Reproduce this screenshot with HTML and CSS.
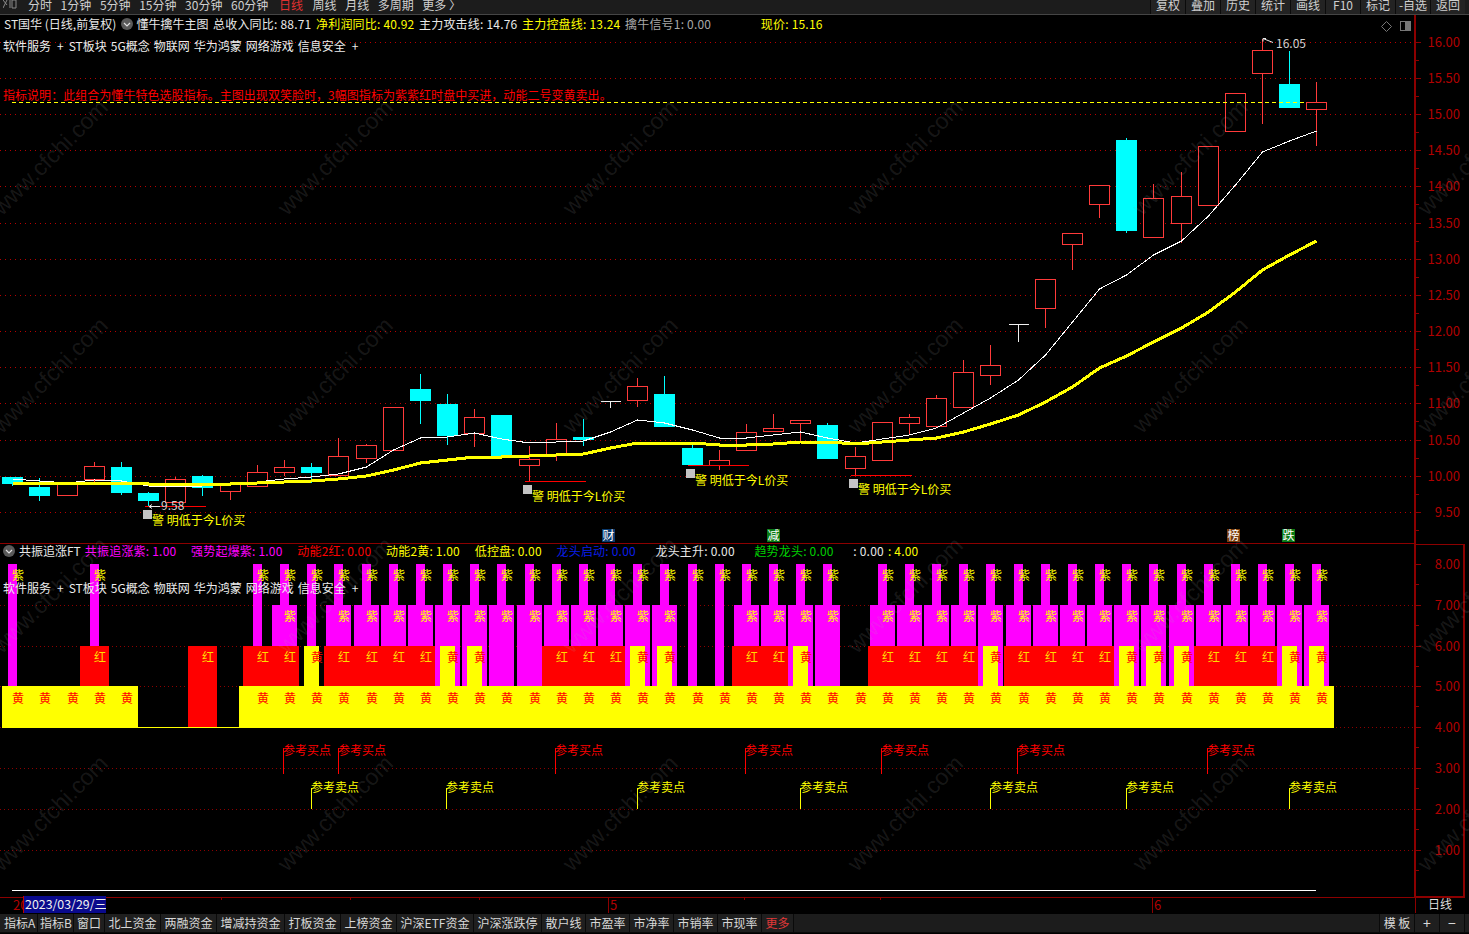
FILE: index.html
```html
<!DOCTYPE html>
<html lang="zh-CN">
<head>
<meta charset="utf-8">
<title>ST国华 日线</title>
<link rel="stylesheet" href="styles.css">
</head>
<body>
<div class="app">
  <header class="toolbar">
    <svg class="tool-logo" width="14" height="9" viewBox="0 0 14 9"><path d="M0 0l4 5M4 0L0 8M7 0v8M9 0h4v8h-4z"/></svg>
    <nav class="periods">
      <span>分时</span><span>1分钟</span><span>5分钟</span><span>15分钟</span><span>30分钟</span><span>60分钟</span>
      <span class="is-active">日线</span><span>周线</span><span>月线</span><span>多周期</span><span>更多 〉</span>
    </nav>
    <nav class="tool-buttons">
      <span>复权</span><span>叠加</span><span>历史</span><span>统计</span><span>画线</span><span>F10</span><span>标记</span><span>-自选</span><span>返回</span>
    </nav>
  </header>

  <section class="pane pane-main">
    <svg id="main-chart" class="chart" viewBox="0 15 1469 529" width="1469" height="529"></svg>
    <div class="legend legend-main">
      <span class="c-white c-title">ST国华 (日线,前复权)</span>
      <svg class="chevron" width="12" height="12" viewBox="0 0 12 12"><circle cx="6" cy="6" r="6"/><path d="M3 5l3 3 3-3"/></svg>
      <span class="c-white c-title tight-left">懂牛擒牛主图</span>
      <span class="c-white">总收入同比: 88.71</span>
      <span class="c-yellow">净利润同比: 40.92</span>
      <span class="c-white">主力攻击线: 14.76</span>
      <span class="c-yellow">主力控盘线: 13.24</span>
      <span class="c-gray">擒牛信号1: 0.00</span>
      <span class="c-yellow gap-price">现价: 15.16</span>
    </div>
    <div class="tags tags-main"><span>软件服务</span><span class="tag-plus">+</span><span>ST板块</span><span>5G概念</span><span>物联网</span><span>华为鸿蒙</span><span>网络游戏</span><span>信息安全</span><span class="tag-plus">+</span></div>
    <div class="note">指标说明：此组合为懂牛特色选股指标。主图出现双笑脸时，3幅图指标为紫紫红时盘中买进，动能二号变黄卖出。</div>
  </section>

  <section class="pane pane-sub">
    <svg id="sub-chart" class="chart" viewBox="0 544 1469 354" width="1469" height="354"></svg>
    <div class="legend legend-sub">
      <svg class="chevron" width="12" height="12" viewBox="0 0 12 12"><circle cx="6" cy="6" r="6"/><path d="M3 5l3 3 3-3"/></svg>
      <span class="c-white c-title">共振追涨FT</span>
      <span class="c-magenta">共振追涨紫: 1.00</span>
      <span class="c-magenta gap-sub">强势起爆紫: 1.00</span>
      <span class="c-red gap-sub">动能2红: 0.00</span>
      <span class="c-yellow gap-sub">动能2黄: 1.00</span>
      <span class="c-yellow gap-sub">低控盘: 0.00</span>
      <span class="c-blue gap-sub">龙头启动: 0.00</span>
      <span class="c-white gap-wide">龙头主升: 0.00</span>
      <span class="c-green gap-wide">趋势龙头: 0.00</span>
      <span class="c-white gap-wide">: 0.00</span>
      <span class="c-yellow">: 4.00</span>
    </div>
    <div class="tags tags-sub"><span>软件服务</span><span class="tag-plus">+</span><span>ST板块</span><span>5G概念</span><span>物联网</span><span>华为鸿蒙</span><span>网络游戏</span><span>信息安全</span><span class="tag-plus">+</span></div>
  </section>

  <section class="date-axis">
    <svg id="date-chart" class="chart" viewBox="0 898 1469 16" width="1469" height="16"></svg>
    <div class="date-cursor">2023/03/29/三</div>
    <div class="date-period">日线</div>
  </section>

  <footer class="tabs">
    <span class="tab-first">指标A</span><span class="tab-narrow">指标B</span><span class="tab-window">窗口</span><span>北上资金</span><span>两融资金</span><span>增减持资金</span><span>打板资金</span><span>上榜资金</span><span>沪深ETF资金</span><span>沪深涨跌停</span><span>散户线</span><span>市盈率</span><span>市净率</span><span>市销率</span><span>市现率</span><span class="tab-more">更多</span>
    <span class="tab-template">模 板</span><span class="tab-zoom">+</span><span class="tab-zoom">−</span>
  </footer>

  <svg id="watermark" class="watermark" viewBox="0 0 1469 934" width="1469" height="934"></svg>
</div>
<script src="script.js"></script>
</body>
</html>
```

FILE: styles.css
```css
* { box-sizing: border-box; }
html, body { margin: 0; padding: 0; background: #000; }
body { font-family: "Noto Sans CJK SC", "Noto Sans", sans-serif; font-size: 12px; color: #ddd; }
.app { position: relative; width: 1469px; height: 934px; overflow: hidden; display: flex; flex-direction: column; background: #000; }

/* top toolbar */
.toolbar { flex: none; height: 15px; display: flex; background: #1c1c1c; border-bottom: 1px solid #454545; overflow: hidden; line-height: 10px; color: #cfcfcf; padding-left: 3px; }
.tool-logo { flex: none; }
.tool-logo path { fill: none; stroke: #8a8a8a; stroke-width: 1; }
.periods { display: flex; gap: 8.6px; margin-left: 11px; }
.periods .is-active { color: #e03030; margin: 0 1px 0 2px; }
.tool-buttons { margin-left: auto; margin-right: 4px; display: flex; gap: 1px; background: #0b0b0b; border-left: 1px solid #0b0b0b; }
.tool-buttons span { width: 34px; text-align: center; background: #232323; }

/* chart panes */
.pane { position: relative; flex: none; }
.pane-main { height: 529px; }
.pane-sub { height: 354px; }
.chart { display: block; }
.legend { position: absolute; left: 4px; display: flex; align-items: center; gap: 4.6px; white-space: nowrap; line-height: 16px; }
.legend span { letter-spacing: 0.2px; }
.legend .c-title { letter-spacing: 0; }
.legend .tight-left { margin-left: -1px; }
.legend-main { top: 1px; }
.legend-sub { top: -1px; left: 3px; gap: 4px; }
.chevron { flex: none; }
.chevron circle { fill: #5a5a5a; }
.chevron path { fill: none; stroke: #e0e0e0; stroke-width: 1.2; }
.gap-price { margin-left: 45px; }
.gap-sub { margin-left: 10.7px; }
.gap-wide { margin-left: 15.6px; }
.c-white { color: #e8e8e8; }
.c-gray { color: #a8a8a8; }
.c-yellow { color: #ffff00; }
.c-magenta { color: #ff00ff; }
.c-red { color: #ff0000; }
.c-blue { color: #0a1eea; }
.c-green { color: #00d000; }
.tags { position: absolute; left: 3px; display: flex; gap: 4px; color: #ececec; white-space: nowrap; line-height: 16px; }
.tag-plus { margin: 0 1px 0 2px; }
.tags-main { top: 23px; }
.tags-sub { top: 36px; }
.note { position: absolute; left: 3px; top: 72px; color: #ff0000; white-space: nowrap; line-height: 16px; letter-spacing: 0.04px; }

/* svg chart parts */
.grid-main { stroke: #b80000; stroke-width: 1; stroke-dasharray: 1 4; shape-rendering: crispEdges; }
.grid-sub { stroke: #8c0000; stroke-width: 1; stroke-dasharray: 1 3; shape-rendering: crispEdges; }
.frame { stroke: #8c0000; stroke-width: 1; shape-rendering: crispEdges; fill: none; }
.frame-thick { stroke: #8c0000; stroke-width: 2; shape-rendering: crispEdges; fill: none; }
.axis-label { fill: #b00000; font-size: 13px; text-anchor: end; dominant-baseline: central; }
.candle-red { fill: #000; stroke: #ff3a3a; stroke-width: 1; shape-rendering: crispEdges; }
.candle-cyan { fill: #00ffff; shape-rendering: crispEdges; }
.wick-red { stroke: #ff3a3a; stroke-width: 1; shape-rendering: crispEdges; }
.wick-cyan { stroke: #00ffff; stroke-width: 1; shape-rendering: crispEdges; }
.wick-white { stroke: #f0f0f0; stroke-width: 1; shape-rendering: crispEdges; }
.ma-white { fill: none; stroke: #ffffff; stroke-width: 1; shape-rendering: crispEdges; }
.ma-yellow { fill: none; stroke: #ffff00; stroke-width: 3; shape-rendering: crispEdges; }
.last-price { stroke: #ffff00; stroke-width: 1; stroke-dasharray: 4 3; shape-rendering: crispEdges; }
.low-line { stroke: #ff0000; stroke-width: 1; shape-rendering: crispEdges; }
.mark-box { fill: #c4c4c4; }
.mark-text { fill: #ffff00; font-size: 12px; dominant-baseline: central; }
.extreme-line { fill: none; stroke: #e8e8e8; stroke-width: 1; }
.extreme-text { fill: #d2d2d2; font-size: 12px; dominant-baseline: central; }
.icon-outline { fill: none; stroke: #777; stroke-width: 1; }
.icon-fill { fill: #777; }
.flag-bg-blue { fill: #0a3a6e; }
.flag-bg-green { fill: #0a7a14; }
.flag-bg-brown { fill: #7a3c0a; }
.flag-text { fill: #fff; font-size: 12px; text-anchor: middle; dominant-baseline: central; }

.bar-magenta { fill: #ff00ff; shape-rendering: crispEdges; }
.bar-red { fill: #ff0000; shape-rendering: crispEdges; }
.bar-yellow { fill: #ffff00; shape-rendering: crispEdges; }
.cell-text { font-size: 12px; dominant-baseline: central; }
.cell-on-magenta { fill: #ffff00; }
.cell-on-red { fill: #ffdd00; }
.cell-on-yellow { fill: #ff0000; }
.signal-buy { fill: #ff0000; font-size: 12px; dominant-baseline: central; }
.signal-sell { fill: #ffff00; font-size: 12px; dominant-baseline: central; }
.signal-line-buy { stroke: #ff0000; stroke-width: 1; shape-rendering: crispEdges; }
.signal-line-sell { stroke: #ffff00; stroke-width: 1; shape-rendering: crispEdges; }
.base-line { stroke: #ffffff; stroke-width: 1; shape-rendering: crispEdges; }

/* date axis */
.date-axis { position: relative; flex: none; height: 16px; }
.date-label { fill: #b00000; font-size: 13px; dominant-baseline: central; }
.date-cursor { position: absolute; left: 23px; top: -2px; width: 83px; height: 17px; line-height: 16px; background: #0a0a8c; border-left: 1px solid #c00000; color: #f0f0f0; font-size: 12.4px; white-space: nowrap; overflow: hidden; padding-left: 1px; }
.date-period { position: absolute; left: 1428px; top: -2px; line-height: 16px; color: #ddd; }

/* bottom tabs */
.tabs { flex: none; height: 19px; display: flex; background: #1c1c1c; line-height: 18px; color: #d8d8d8; border-bottom: 1px solid #0a0a0a; }
.tabs span { padding: 0 3.5px; background: #1f1f1f; border-right: 1px solid #0a0a0a; white-space: nowrap; }
.tabs .tab-first { padding: 0 2px 0 4px; width: 38px; }
.tabs .tab-narrow { padding: 0 2px; width: 36px; }
.tabs .tab-window { padding: 0 3px; width: 31px; }
.tabs .tab-more { color: #e03838; }
.tabs .tab-template { margin-left: auto; width: 36px; padding: 0; text-align: center; border-left: 1px solid #0a0a0a; }
.tabs .tab-zoom { width: 25px; padding: 0; text-align: center; font-size: 14px; }
.tabs .tab-zoom:last-child { margin-right: 4px; }

/* watermark */
.watermark { position: absolute; left: 0; top: 0; pointer-events: none; }
.watermark-text { fill: rgba(170, 170, 170, 0.15); font-family: "Liberation Sans", sans-serif; font-size: 23px; text-anchor: middle; dominant-baseline: central; }
```

FILE: script.js
```js
var NS = 'http://www.w3.org/2000/svg';
var STEP = 27.17, X0 = 12.3;
function cx(i) { return Math.round(X0 + STEP * i) + 0.5; }

function el(parent, name, cls, attrs, text) {
  var n = document.createElementNS(NS, name);
  if (cls) n.setAttribute('class', cls);
  for (var k in attrs) n.setAttribute(k, attrs[k]);
  if (text !== undefined) n.textContent = text;
  parent.appendChild(n);
  return n;
}
function line(p, cls, x1, y1, x2, y2) { return el(p, 'line', cls, { x1: x1, y1: y1, x2: x2, y2: y2 }); }
function rect(p, cls, x, y, w, h) { return el(p, 'rect', cls, { x: x, y: y, width: w, height: h }); }
function text(p, cls, x, y, s) { return el(p, 'text', cls, { x: x, y: y }, s); }

/* ---------- main chart ---------- */
var main = document.getElementById('main-chart');
var prices = [['16.00', 42], ['15.50', 78], ['15.00', 114], ['14.50', 150], ['14.00', 186], ['13.50', 223], ['13.00', 259],
  ['12.50', 295], ['12.00', 331], ['11.50', 367], ['11.00', 403], ['10.50', 440], ['10.00', 476], ['9.50', 512]];
prices.forEach(function (p) {
  line(main, 'grid-main', 0, p[1] + 0.5, 1414, p[1] + 0.5);
  line(main, 'frame', 1416, p[1] + 0.5, 1421, p[1] + 0.5);
  line(main, 'frame', 1416, p[1] + 18.5, 1419, p[1] + 18.5);
  text(main, 'axis-label', 1460, p[1] - 1, p[0]);
});
line(main, 'frame-thick', 1415, 15, 1415, 544);

// top, bottom, wick top, wick bottom, kind
var candles = [
  [477, 484, 477, 486, 'c'], [487, 496, 478, 501, 'c'], [483, 495, 483, 495, 'r'], [466, 479, 462, 482, 'r'],
  [467, 493, 462, 495, 'c'], [493, 501, 492, 507, 'c'], [479, 502, 477, 502, 'r'], [476, 488, 475, 496, 'c'],
  [483, 491, 483, 500, 'r'], [472, 486, 465, 486, 'r'], [467, 472, 460, 476, 'r'], [467, 473, 463, 483, 'c'],
  [456, 475, 438, 475, 'r'], [445, 458, 444, 463, 'r'], [407, 450, 407, 450, 'r'], [389, 401, 374, 424, 'c'],
  [404, 436, 394, 445, 'c'], [417, 433, 409, 447, 'r'], [415, 456, 415, 456, 'c'], [459, 465, 446, 481, 'r'],
  [439, 454, 423, 461, 'r'], [437, 440, 419, 446, 'c'], [401, 401, 401, 408, 'w'], [386, 400, 378, 407, 'r'],
  [394, 427, 376, 427, 'c'], [448, 465, 442, 465, 'c'], [460, 465, 450, 470, 'r'], [432, 450, 424, 450, 'r'],
  [428, 431, 414, 432, 'r'], [420, 423, 420, 441, 'r'], [425, 459, 423, 459, 'c'], [456, 468, 447, 475, 'r'],
  [422, 460, 422, 460, 'r'], [417, 423, 414, 435, 'r'], [398, 426, 395, 426, 'r'], [372, 407, 360, 407, 'r'],
  [365, 375, 345, 385, 'r'], [324, 324, 324, 342, 'w'], [279, 308, 279, 328, 'r'], [233, 244, 233, 270, 'r'],
  [185, 204, 185, 218, 'r'], [140, 231, 138, 233, 'c'], [198, 237, 184, 237, 'r'], [196, 223, 172, 243, 'r'],
  [146, 205, 146, 205, 'r'], [93, 131, 93, 131, 'r'], [50, 73, 39, 124, 'r'], [84, 108, 51, 108, 'c'],
  [102, 109, 82, 146, 'r']
];
candles.forEach(function (c, i) {
  var x = cx(i), top = c[0], bot = c[1], wt = c[2], wb = c[3], k = c[4];
  if (k === 'w') {
    line(main, 'wick-white', x - 10, top + 0.5, x + 10, top + 0.5);
    line(main, 'wick-white', x, top, x, wb);
  } else if (k === 'c') {
    line(main, 'wick-cyan', x, wt, x, wb);
    rect(main, 'candle-cyan', x - 10.5, top, 21, bot - top);
  } else {
    if (wt < top) line(main, 'wick-red', x, wt, x, top);
    if (wb > bot) line(main, 'wick-red', x, bot, x, wb);
    rect(main, 'candle-red', x - 10, top + 0.5, 20, bot - top);
  }
});

var maWhite = [479, 481, 483, 480, 481, 486, 487, 486, 485, 482, 479, 477, 474, 467, 450, 438, 437, 433, 439, 443, 442, 441, 432, 420, 423, 430, 438, 438, 435, 432, 438, 443, 439, 435, 428, 413, 398, 380, 355, 322, 289, 275, 255, 241, 216, 185, 152, 141, 131];
var maYellow = [483, 483, 483, 483, 483, 484, 484, 484, 484, 483, 482, 481, 479, 476, 470, 463, 460, 457, 457, 456, 455, 454, 448, 443, 443, 443, 445, 445, 444, 442, 442, 444, 442, 440, 438, 432, 424, 415, 402, 387, 368, 356, 342, 328, 312, 292, 270, 255, 241];
function points(arr) { return arr.map(function (y, i) { return cx(i) + ',' + y; }).join(' '); }
el(main, 'polyline', 'ma-white', { points: points(maWhite) });
el(main, 'polyline', 'ma-yellow', { points: points(maYellow) });

line(main, 'last-price', 12, 102.5, 1306, 102.5);

[[145, 206, 506.5], [525, 586, 481.5], [688, 749, 465.5], [851, 912, 475.5]].forEach(function (l) {
  line(main, 'low-line', l[0], l[2], l[1], l[2]);
});
[[143, 510, 152, 519], [523, 485, 532, 495], [686, 469, 695, 479], [849, 479, 858, 488]].forEach(function (m) {
  rect(main, 'mark-box', m[0], m[1], 9, 9);
  text(main, 'mark-text', m[2], m[3], '警 明低于今L价买');
});

el(main, 'path', 'extreme-line', { d: 'M1263 38.5l10 4M1263 38.5h3M1263 38.5v3' });
text(main, 'extreme-text', 1276, 42.5, '16.05');
el(main, 'path', 'extreme-line', { d: 'M160 506.5h-11M149 506.5l3-2M149 506.5l3 2' });
text(main, 'extreme-text', 161, 504, '9.58');

el(main, 'path', 'icon-outline', { d: 'M1386.5 21.5l5 5-5 5-5-5z' });
rect(main, 'icon-outline', 1400.5, 21.5, 10, 9);
rect(main, 'icon-fill', 1405, 22, 5, 8);

[['财', 602, 'flag-bg-blue'], ['减', 767, 'flag-bg-green'], ['榜', 1227, 'flag-bg-brown'], ['跌', 1282, 'flag-bg-green']].forEach(function (f) {
  rect(main, f[2], f[1], 529, 13, 13);
  text(main, 'flag-text', f[1] + 6.5, 534.5, f[0]);
});
line(main, 'frame', 0, 543.5, 1415, 543.5);

/* ---------- indicator chart ---------- */
var sub = document.getElementById('sub-chart');
[['8.00', 564, 0], ['7.00', 605, 1], ['6.00', 646, 1], ['5.00', 686, 1], ['4.00', 727, 1], ['3.00', 768, 1], ['2.00', 809, 1], ['1.00', 850, 1]].forEach(function (p) {
  if (p[2]) line(sub, 'grid-sub', 0, p[1] + 0.5, 1414, p[1] + 0.5);
  line(sub, 'frame', 1416, p[1] + 0.5, 1421, p[1] + 0.5);
  line(sub, 'frame', 1416, p[1] + 20.5, 1419, p[1] + 20.5);
  text(sub, 'axis-label', 1460, p[1] - 1, p[0]);
});
rect(sub, 'frame-thick', 1415, 544, 49, 353);
line(sub, 'frame', 0, 897.5, 1415, 897.5);
line(sub, 'base-line', 12, 890.5, 1316, 890.5);

rect(sub, 'bar-yellow', 2, 686, 136, 42);
rect(sub, 'bar-yellow', 138, 727, 101, 1);
rect(sub, 'bar-yellow', 239, 686, 1095, 42);
rect(sub, 'bar-red', 188, 646, 29, 81);

// row codes per column: n narrow, w wide; row 3: R red, Y yellow, M plain magenta, '-' none
var rows = [
  'n-', '--', '--', 'nR', '--', '--', '--', '--', '--', 'nR', 'wR', 'nY', 'wR', 'wR', 'wR', 'wR', 'wY', 'wY', 'wM', 'wM',
  'wR', 'wR', 'wR', 'wY', 'wY', 'n-', 'n-', 'wR', 'wR', 'wY', 'wM', '--', 'wR', 'wR', 'wR', 'wR', 'wY', 'wR', 'wR', 'wR',
  'wR', 'wY', 'wY', 'wY', 'wR', 'wR', 'wR', 'wY', 'wY'
];
rows.forEach(function (r, i) {
  var x = Math.round(X0 + STEP * i);
  if (r[0] !== '-') rect(sub, 'bar-magenta', x - 4, 564, 9, 122);
  if (r[0] === 'w') rect(sub, 'bar-magenta', x - 12, 605, 25, 81);
});
rows.forEach(function (r, i) {
  var x = Math.round(X0 + STEP * i);
  if (r[1] === 'R') rect(sub, 'bar-red', x - 14, 646, 29, 40);
});
rows.forEach(function (r, i) {
  var x = Math.round(X0 + STEP * i);
  if (r[1] === 'Y') rect(sub, 'bar-yellow', x - 7, 646, 15, 40);
});
rows.forEach(function (r, i) {
  var x = Math.round(X0 + STEP * i);
  if (r[0] !== '-') text(sub, 'cell-text cell-on-magenta', x, 574.5, '紫');
  if (r[0] === 'w') text(sub, 'cell-text cell-on-magenta', x, 615.5, '紫');
  if (r[1] === 'R') text(sub, 'cell-text cell-on-red', x, 656.5, '红');
  if (r[1] === 'Y') text(sub, 'cell-text cell-on-yellow', x, 656.5, '黄');
  if (i < 5 || i > 8) text(sub, 'cell-text cell-on-yellow', x, 697, '黄');
});
text(sub, 'cell-text cell-on-red', 202, 656.5, '红');

[283, 338, 555, 745, 881, 1017, 1207].forEach(function (x) {
  line(sub, 'signal-line-buy', x + 0.5, 748, x + 0.5, 774);
  text(sub, 'signal-buy', x, 749, '参考买点');
});
[311, 446, 637, 800, 990, 1126, 1289].forEach(function (x) {
  line(sub, 'signal-line-sell', x + 0.5, 788, x + 0.5, 809);
  text(sub, 'signal-sell', x, 786, '参考卖点');
});

/* ---------- date axis ---------- */
var dates = document.getElementById('date-chart');
text(dates, 'date-label', 13, 904, '20');
[221, 350, 479, 744, 880].forEach(function (x) { line(dates, 'frame', x + 0.5, 898, x + 0.5, 900); });
line(dates, 'frame', 608.5, 898, 608.5, 913);
text(dates, 'date-label', 610, 904, '5');
line(dates, 'frame', 1152.5, 898, 1152.5, 913);
text(dates, 'date-label', 1154, 904, '6');
line(dates, 'frame', 1415, 898, 1415, 913);

/* ---------- watermark ---------- */
var mark = document.getElementById('watermark');
[157, 375, 595, 813].forEach(function (y) {
  [50, 335, 620, 905, 1190, 1475].forEach(function (x) {
    el(mark, 'text', 'watermark-text', { x: x, y: y, transform: 'rotate(-45 ' + x + ' ' + y + ')' }, 'www.cfchi.com');
  });
});
```
